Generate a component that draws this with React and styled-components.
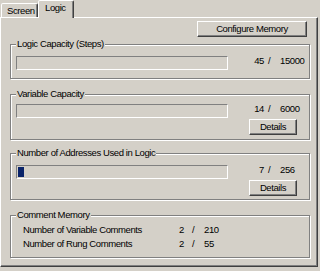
import React from 'react';
import styled, { createGlobalStyle } from 'styled-components';

const GlobalStyle = createGlobalStyle`
  body {
    margin: 0;
    background: #d4d0c8;
    font-family: "Liberation Sans", Arial, sans-serif;
    font-size: 9.5px;
    letter-spacing: -0.4px;
    color: #000;
  }
`;

const Window = styled.div`
  width: 320px;
  height: 271px;
  background: #d4d0c8;
  display: flex;
  flex-direction: column;
  overflow: hidden;
`;

const TabStrip = styled.div`
  display: flex;
  align-items: flex-end;
  height: 17px;
  padding-left: 1px;
`;

const Tab = styled.div`
  box-sizing: border-box;
  position: relative;
  z-index: ${(p) => (p.$active ? 2 : 1)};
  width: ${(p) => p.$width}px;
  height: ${(p) => (p.$active ? 18 : 14)}px;
  margin-bottom: ${(p) => (p.$active ? -1 : 0)}px;
  padding: 1px 0 0 ${(p) => (p.$active ? 6 : 5)}px;
  line-height: 12px;
  background: #d4d0c8;
  border: 1px solid;
  border-bottom: none;
  border-color: #fff #404040 transparent #fff;
  box-shadow: inset -1px 0 0 #808080;
  border-radius: 2px 2px 0 0;
  white-space: nowrap;
`;

const Panel = styled.div`
  box-sizing: border-box;
  width: 318px;
  height: 250px;
  padding: 3px 7px 0 9px;
  border: 1px solid;
  border-color: #fff #404040 #404040 #fff;
  box-shadow: inset -1px -1px 0 #808080;
  display: flex;
  flex-direction: column;
`;

const Toolbar = styled.div`
  display: flex;
  justify-content: flex-end;
  padding-right: 3px;
`;

const Button = styled.button`
  box-sizing: border-box;
  width: ${(p) => p.$width}px;
  height: 16px;
  padding: 0;
  background: #d4d0c8;
  border: 1px solid;
  border-color: #fff #404040 #404040 #fff;
  box-shadow: inset -1px -1px 0 #808080;
  font-family: inherit;
  font-size: inherit;
  letter-spacing: inherit;
  color: #000;
  line-height: 12px;
`;

const Group = styled.div`
  box-sizing: border-box;
  position: relative;
  width: 300px;
  margin-top: ${(p) => p.$gap}px;
  padding: ${(p) => p.$pad};
  border: 1px solid #808080;
  box-shadow: inset 1px 1px 0 #fff, 1px 1px 0 #fff;
`;

const Legend = styled.span`
  position: absolute;
  top: -7px;
  left: 5px;
  padding: 0 1px;
  line-height: 12px;
  background: #d4d0c8;
  white-space: nowrap;
`;

const MeterRow = styled.div`
  display: grid;
  grid-template-columns: 212px 1fr;
  column-gap: 12px;
  align-items: start;
`;

const Bar = styled.div`
  box-sizing: border-box;
  height: 14px;
  padding: 1px;
  border: 1px solid;
  border-color: #808080 #fff #fff #808080;
  display: flex;
  gap: 2px;
`;

const Block = styled.div`
  width: 6px;
  height: 10px;
  background: #0a246a;
`;

const Side = styled.div`
  display: flex;
  flex-direction: column;
  align-items: flex-start;
`;

const Count = styled.div`
  display: grid;
  grid-template-columns: 24px 16px auto;
  line-height: 10px;
  margin-bottom: 5px;
`;

const Used = styled.span`
  text-align: right;
`;

const Slash = styled.span`
  padding-left: 4px;
`;

const DetailsButton = styled(Button)`
  margin-left: 9px;
`;

const CommentRow = styled.div`
  display: grid;
  grid-template-columns: 156px 13px 12px auto;
  height: 14px;
  line-height: 14px;
`;

const BLOCK = 8;
const INNER = 208;

const Meter = ({ used, total, details }) => {
  const blocks = Math.round(((used / total) * INNER) / BLOCK);
  return (
    <MeterRow>
      <Bar>
        {Array.from({ length: blocks }).map((_, i) => (
          <Block key={i} />
        ))}
      </Bar>
      <Side>
        <Count>
          <Used>{used}</Used>
          <Slash>/</Slash>
          <span>{total}</span>
        </Count>
        {details && <DetailsButton $width={48}>Details</DetailsButton>}
      </Side>
    </MeterRow>
  );
};

const comments = [
  { label: 'Number of Variable Comments', used: 2, total: 210 },
  { label: 'Number of Rung Comments', used: 2, total: 55 },
];

export default function App() {
  return (
    <>
      <GlobalStyle />
      <Window>
        <TabStrip>
          <Tab $width={37}>Screen</Tab>
          <Tab $width={36} $active>Logic</Tab>
        </TabStrip>
        <Panel>
          <Toolbar>
            <Button $width={110}>Configure Memory</Button>
          </Toolbar>

          <Group $gap={7} $pad="11px 0 7px 5px">
            <Legend>Logic Capacity (Steps)</Legend>
            <Meter used={45} total={15000} />
          </Group>

          <Group $gap={15} $pad="9px 0 4px 5px">
            <Legend>Variable Capacity</Legend>
            <Meter used={14} total={6000} details />
          </Group>

          <Group $gap={13} $pad="11px 0 3px 5px">
            <Legend>Number of Addresses Used in Logic</Legend>
            <Meter used={7} total={256} details />
          </Group>

          <Group $gap={15} $pad="7px 0 6px 12px">
            <Legend>Comment Memory</Legend>
            {comments.map((c) => (
              <CommentRow key={c.label}>
                <span>{c.label}</span>
                <span>{c.used}</span>
                <span>/</span>
                <span>{c.total}</span>
              </CommentRow>
            ))}
          </Group>
        </Panel>
      </Window>
    </>
  );
}
